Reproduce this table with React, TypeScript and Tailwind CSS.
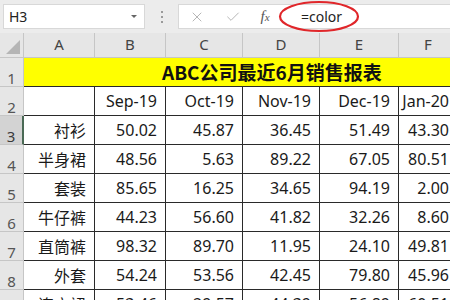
import { X, Check } from 'lucide-react';

const cols = ['A', 'B', 'C', 'D', 'E', 'F'];
const months = ['Sep-19', 'Oct-19', 'Nov-19', 'Dec-19', 'Jan-20'];

const rows = [
  { name: '衬衫', values: ['50.02', '45.87', '36.45', '51.49', '43.30'] },
  { name: '半身裙', values: ['48.56', '5.63', '89.22', '67.05', '80.51'] },
  { name: '套装', values: ['85.65', '16.25', '34.65', '94.19', '2.00'] },
  { name: '牛仔裤', values: ['44.23', '56.60', '41.82', '32.26', '8.60'] },
  { name: '直筒裤', values: ['98.32', '89.70', '11.95', '24.10', '49.81'] },
  { name: '外套', values: ['54.24', '53.56', '42.45', '79.80', '45.96'] },
  { name: '连衣裙', values: ['53.46', '29.57', '44.39', '56.89', '60.51'] },
];

const font = { fontFamily: '"Noto Sans", "Noto Sans CJK SC", sans-serif' };

const RowHead = ({ n, selected }: { n: number; selected?: boolean }) => (
  <div
    className={`h-[29px] flex items-end justify-center text-[15px] leading-[18px] border-b border-[#c6c6c6] ${
      selected ? 'bg-[#d3d3d3] text-[#3a3a3a] border-r-2 border-r-[#4a6a55]' : 'bg-[#e6e6e6] text-[#555] border-r border-r-[#c6c6c6]'
    }`}
  >
    <span className="translate-y-[1px]">{n}</span>
  </div>
);

const Cell = ({ children, last }: { children?: React.ReactNode; last?: boolean }) => (
  <div
    className={`h-[29px] flex items-center justify-end pr-[8px] text-[16px] text-[#1a1a1a] bg-white border-b border-[#2a2a2a] whitespace-nowrap overflow-hidden ${
      last ? '' : 'border-r'
    }`}
  >
    {children}
  </div>
);

export default function App() {
  return (
    <div className="w-[450px] h-[300px] overflow-hidden bg-white select-none" style={font}>
      {/* formula bar */}
      <div className="h-[33px] bg-[#ececec] flex items-start pt-[4px]">
        <div className="shrink-0 ml-[3px] w-[142px] h-[25px] bg-white border border-[#d8d8d8] flex items-center justify-between px-[5px]">
          <span className="text-[14px] text-[#222]">H3</span>
          <span className="w-0 h-0 border-l-[3px] border-r-[3px] border-t-[3px] border-l-transparent border-r-transparent border-t-[#666] mr-[2px]" />
        </div>
        <div className="shrink-0 w-[33px] h-[25px] flex flex-col items-center justify-center gap-[3px]">
          <span className="w-[2px] h-[2px] bg-[#9a9a9a]" />
          <span className="w-[2px] h-[2px] bg-[#9a9a9a]" />
          <span className="w-[2px] h-[2px] bg-[#9a9a9a]" />
        </div>
        <div className="flex-1 h-[25px] bg-white border border-[#d8d8d8] border-r-0 flex items-center relative">
          <div className="shrink-0 w-[35px] flex justify-center">
            <X size={16} strokeWidth={1.4} color="#b0b0b0" />
          </div>
          <div className="shrink-0 w-[37px] flex justify-center">
            <Check size={16} strokeWidth={1.4} color="#b0b0b0" />
          </div>
          <div className="shrink-0 w-[28px] flex justify-center">
            <span className="italic text-[15px] text-[#555]" style={{ fontFamily: '"Liberation Serif", serif' }}>
              f<span className="text-[11px]">x</span>
            </span>
          </div>
          <div className="shrink-0 w-[22px]" />
          <span className="shrink-0 text-[14px] text-[#222]">=color</span>
          <svg className="absolute left-[99px] top-[-5px]" width="82" height="33" viewBox="0 0 82 33">
            <ellipse cx="41" cy="16.5" rx="39" ry="14.5" fill="none" stroke="#e0262a" strokeWidth="2.2" />
          </svg>
        </div>
      </div>

      {/* sheet grid */}
      <div className="grid grid-cols-[24px_71px_71px_77px_77px_79px_58px]">
        {/* column headers */}
        <div className="h-[25px] bg-[#e6e6e6] border-b border-r border-[#c6c6c6] flex items-end justify-end p-[3px]">
          <svg width="14" height="14" viewBox="0 0 14 14">
            <polygon points="14,0 14,14 0,14" fill="#b5b5b5" />
          </svg>
        </div>
        {cols.map((c, i) => (
          <div
            key={c}
            className={`h-[25px] bg-[#e6e6e6] border-b border-[#c6c6c6] flex items-end justify-center pb-[2px] text-[15px] text-[#444] ${
              i < cols.length - 1 ? 'border-r' : ''
            }`}
          >
            {c}
          </div>
        ))}

        {/* row 1 title */}
        <RowHead n={1} />
        <div className="col-span-6 h-[29px] bg-[#ffff00] border-b border-[#2a2a2a] flex items-center pl-[138px] whitespace-nowrap">
          <span className="text-[19px] font-bold text-[#111]" style={{ fontFamily: '"Noto Sans CJK SC", "Noto Sans", sans-serif' }}>
            ABC公司最近6月销售报表
          </span>
        </div>

        {/* row 2 months */}
        <RowHead n={2} />
        <Cell />
        {months.map((m, i) => (
          <Cell key={m} last={i === months.length - 1}>
            {m}
          </Cell>
        ))}

        {rows.map((r, ri) => (
          <>
            <RowHead key={`h${ri}`} n={ri + 3} selected={ri === 0} />
            <Cell key={`n${ri}`}>
              <span style={{ fontFamily: '"Noto Sans CJK SC", sans-serif' }}>{r.name}</span>
            </Cell>
            {r.values.map((v, vi) => (
              <Cell key={`v${ri}-${vi}`} last={vi === r.values.length - 1}>
                {v}
              </Cell>
            ))}
          </>
        ))}
      </div>
    </div>
  );
}
